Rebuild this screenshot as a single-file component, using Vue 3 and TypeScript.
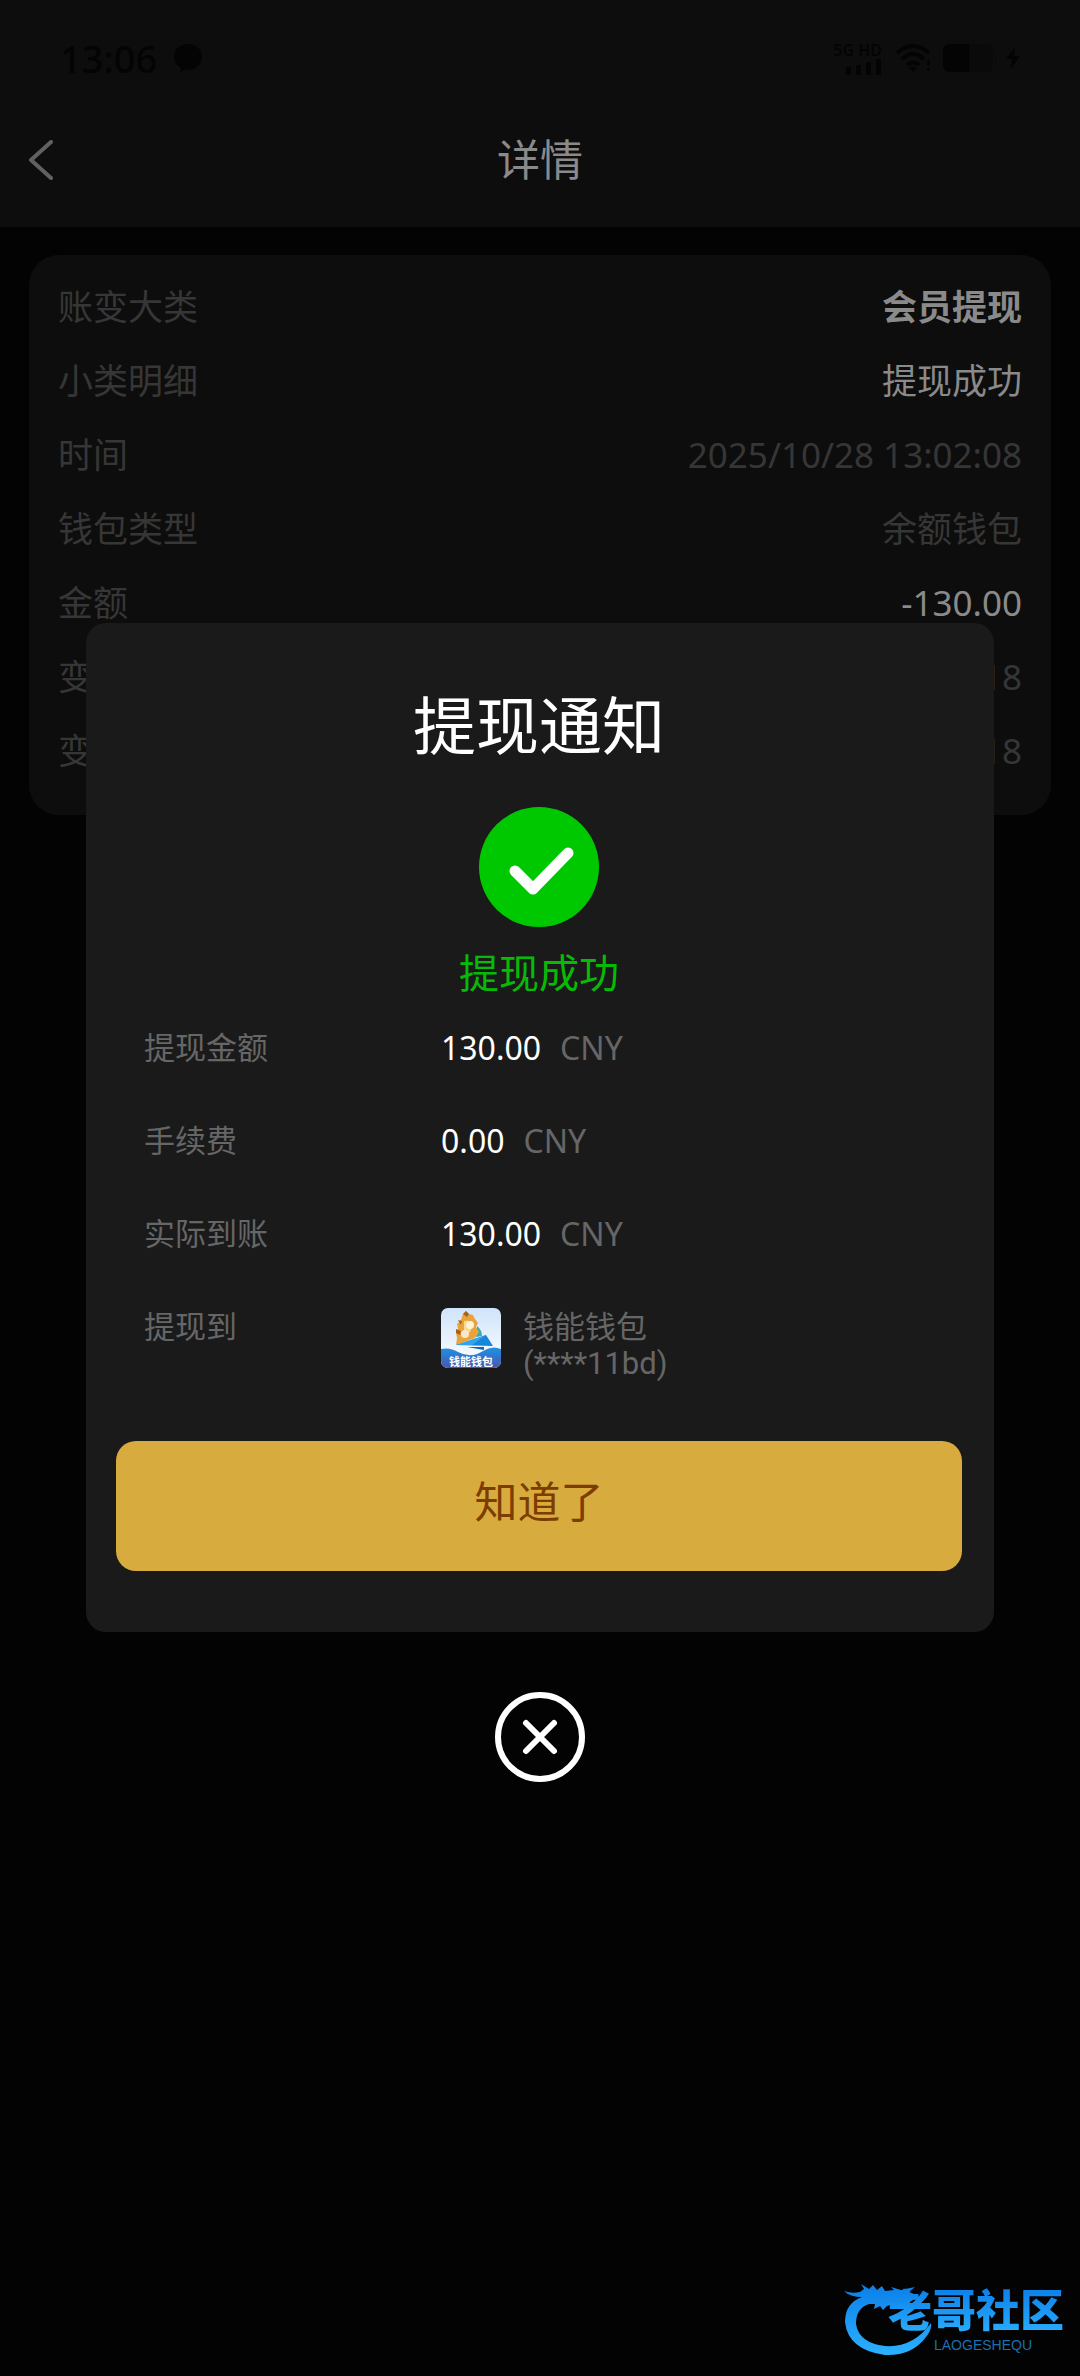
<script setup lang="ts">
import { ref } from 'vue'

interface DetailRow {
  label: string
  value: string
  tone?: 'strong' | 'bright'
}

interface AmountRow {
  label: string
  amount: string
}

const rows: DetailRow[] = [
  { label: '账变大类', value: '会员提现', tone: 'strong' },
  { label: '小类明细', value: '提现成功', tone: 'bright' },
  { label: '时间', value: '2025/10/28 13:02:08' },
  { label: '钱包类型', value: '余额钱包' },
  { label: '金额', value: '-130.00', tone: 'bright' },
  { label: '变动前', value: '0.18' },
  { label: '变动后', value: '0.18' },
]

const amounts: AmountRow[] = [
  { label: '提现金额', amount: '130.00' },
  { label: '手续费', amount: '0.00' },
  { label: '实际到账', amount: '130.00' },
]

const open = ref(true)
</script>

<template>
  <div class="page">
    <header class="top">
      <div class="status">
        <span class="clock">13:06</span>
        <svg class="bubble" viewBox="0 0 30 30" aria-hidden="true">
          <path d="M15 1C7 1 1 6.500 1 14c0 5 3 8.500 7 11l-1 4 6-2.500c9 1 16-4.500 16-12.500C29 6.500 23 1 15 1z" />
        </svg>
        <span class="spacer"></span>
        <div class="signal">
          <span>5G HD</span>
          <svg viewBox="0 0 36 16" aria-hidden="true">
            <path d="M0 8h5v8H0zM10 6h5v10h-5zM20 3h5v13h-5zM30 0h5v16h-5z" />
          </svg>
        </div>
        <svg class="wifi" viewBox="0 0 36 30" aria-hidden="true">
          <path d="M2 10Q18-4 34 10M7 16q11-10 22 0M12 22q6-5 12 0" fill="none" stroke="#040404" stroke-width="4" />
          <path d="M14 25q4-3 8 0l-4 4zM32 17h3v5h-3zM32 25h3v3h-3z" />
        </svg>
        <svg class="battery" viewBox="0 0 54 28" aria-hidden="true">
          <rect width="50" height="28" rx="7" fill="#0a0a0a" />
          <path d="M26 0H7Q0 0 0 7v14q0 7 7 7h19z" />
          <path d="M52 9q2 5 0 10z" fill="#0a0a0a" />
        </svg>
        <svg class="bolt" viewBox="0 0 14 22" aria-hidden="true">
          <path d="M9 0 0 12h6L5 22l9-13H8z" />
        </svg>
      </div>
      <nav class="nav">
        <button class="back" type="button" aria-label="返回">
          <svg viewBox="0 0 26 40" aria-hidden="true">
            <path d="M23 2 3 20l20 18" fill="none" stroke="#616161" stroke-width="4" stroke-linecap="round" stroke-linejoin="round" />
          </svg>
        </button>
        <h1>详情</h1>
      </nav>
    </header>

    <main class="content">
      <dl class="card">
        <div v-for="row in rows" :key="row.label" class="row">
          <dt>{{ row.label }}</dt>
          <dd :class="row.tone">{{ row.value }}</dd>
        </div>
      </dl>
    </main>

    <div v-if="open" class="overlay">
      <section class="modal" role="dialog" aria-modal="true" aria-labelledby="notice-title">
        <h2 id="notice-title">提现通知</h2>
        <svg class="tick" viewBox="0 0 120 120" aria-hidden="true">
          <circle cx="60" cy="60" r="60" fill="#00c800" />
          <path d="M36 64l18 18 35-36" fill="none" stroke="#fff" stroke-width="11" stroke-linecap="round" stroke-linejoin="round" />
        </svg>
        <p class="result">提现成功</p>
        <dl class="facts">
          <div v-for="item in amounts" :key="item.label" class="fact">
            <dt>{{ item.label }}</dt>
            <dd class="money"><b>{{ item.amount }}</b><span>CNY</span></dd>
          </div>
          <div class="fact">
            <dt>提现到</dt>
            <dd>
              <svg class="wallet" viewBox="0 0 60 60" aria-hidden="true">
                <defs>
                  <linearGradient id="sky" x1="0" y1="0" x2="0" y2="1">
                    <stop offset="0" stop-color="#cfe4fb" />
                    <stop offset="1" stop-color="#ffffff" />
                  </linearGradient>
                  <linearGradient id="sea" x1="0" y1="0" x2="0" y2="1">
                    <stop offset="0" stop-color="#1d93e4" />
                    <stop offset="1" stop-color="#4a55ad" />
                  </linearGradient>
                  <clipPath id="tile"><rect width="60" height="60" rx="7" /></clipPath>
                </defs>
                <g clip-path="url(#tile)">
                  <rect width="60" height="60" fill="url(#sky)" />
                  <path d="M36 18q5 4 5 10l-6 1z" fill="#39aab5" />
                  <path d="M22 6l3-3 3 3 4 1 2 4 3 4-2 4 3 5-4 6-19 7 1-7-1-5 2-4-1-5 4-4z" fill="#e9a33b" />
                  <path d="M22 6l3-3 3 3-2 3zM15 21l5 2-1 4-4-2zM17 12l4 1-1 4z" fill="#a8611d" />
                  <path d="M23 13q6-2 9 4l-3 7q-5 4-6-2z" fill="#fbd68b" />
                  <circle cx="29" cy="17" r="4" fill="#fff3dc" />
                  <circle cx="24" cy="26" r="4" fill="#f7e7c9" />
                  <path d="M15 37 45 27l7 11z" fill="#1685dc" />
                  <path d="M15 37l30-10-14 10z" fill="#30a4ee" />
                  <path d="M26 39h17v3z" fill="#1568b8" />
                  <path d="M0 41q9-2 17 3 13 7 25-1 9-6 18-2v19H0z" fill="url(#sea)" />
                </g>
                <text x="30" y="58" text-anchor="middle" font-size="11" font-weight="700" fill="#fff">钱能钱包</text>
              </svg>
              <div class="account">
                <span>钱能钱包</span>
                <span class="number">(****11bd)</span>
              </div>
            </dd>
          </div>
        </dl>
        <button class="confirm" type="button" @click="open = false">知道了</button>
      </section>
      <button class="close" type="button" aria-label="关闭" @click="open = false">
        <svg viewBox="0 0 90 90" aria-hidden="true">
          <circle cx="45" cy="45" r="42" fill="none" stroke="#fff" stroke-width="6" />
          <path d="M31 31l28 28M59 31 31 59" stroke="#fff" stroke-width="6" stroke-linecap="round" />
        </svg>
      </button>
    </div>

    <div class="brand">
      <svg viewBox="0 0 90 72" aria-hidden="true">
        <defs>
          <linearGradient id="blue" x1="0" y1="0" x2="0" y2="1">
            <stop offset="0" stop-color="#0b7fe8" />
            <stop offset="1" stop-color="#2cb0ff" />
          </linearGradient>
        </defs>
        <path
          fill="url(#blue)"
          d="M0 7q8 3 16 1l4-3-3-5 8 5 4-4 4 5 5-4 3 5 9-1-3-3 10 3 14-3-6 5 5 2-8 4 9 1-7 4-12 0-9 3-4 4-3-4-6 3 1-5-6 0Q12 24 12 40q3 19 29 22 28 2 46-23 1 7-5 14-14 19-41 18Q4 66 1 38 1 19 18 13 6 13 0 7z"
        />
      </svg>
      <div class="words">
        <span class="name">老哥社区</span>
        <span class="latin">LAOGESHEQU</span>
      </div>
    </div>
  </div>
</template>

<style>
body {
  margin: 0;
  background: #030303;
}
</style>

<style scoped>
.page {
  position: relative;
  min-height: 100vh;
  background: #030303;
  color: #363636;
  font-family: "Noto Sans", "Noto Sans CJK SC", sans-serif;
  font-size: 35px;
}

h1,
h2,
p,
dl,
dd {
  margin: 0;
  font-weight: 400;
}

button {
  padding: 0;
  border: 0;
  background: none;
  font: inherit;
  cursor: pointer;
}

svg {
  display: block;
  flex: none;
}

.top {
  background: #0d0d0d;
}

.status {
  display: flex;
  align-items: center;
  height: 116px;
  padding: 0 60px;
  color: #040404;
  fill: #040404;
}

.clock {
  font-size: 38px;
  font-weight: 500;
  line-height: 44px;
}

.bubble {
  width: 30px;
  height: 30px;
  margin-left: 16px;
}

.spacer {
  flex: 1;
}

.signal {
  display: flex;
  flex-direction: column;
  align-items: flex-end;
  font-size: 16px;
  font-weight: 600;
  line-height: 18px;
}

.signal svg {
  width: 36px;
  height: 16px;
}

.wifi {
  width: 36px;
  height: 30px;
  margin-left: 13px;
}

.battery {
  width: 54px;
  height: 28px;
  margin-left: 12px;
}

.bolt {
  width: 14px;
  height: 22px;
  margin-left: 9px;
}

.nav {
  display: grid;
  grid-template-columns: 80px 1fr 80px;
  height: 111px;
}

.back {
  display: flex;
  align-items: center;
  height: 88px;
  padding-left: 28px;
}

.back svg {
  width: 26px;
  height: 40px;
}

h1 {
  color: #8a8a8a;
  font-size: 43px;
  line-height: 88px;
  text-align: center;
}

.content {
  padding: 28px 29px;
}

.card {
  padding: 15px 29px 27px;
  border-radius: 30px;
  background: #0d0d0d;
}

.row {
  display: flex;
  justify-content: space-between;
  line-height: 74px;
}

.bright,
.strong {
  color: #8a8a8a;
}

.strong {
  font-weight: 700;
}

.overlay {
  position: absolute;
  inset: 0;
  display: flex;
  flex-direction: column;
  align-items: center;
  justify-content: center;
  padding: 29px 86px 0;
}

.modal {
  box-sizing: border-box;
  width: 100%;
  padding: 62px 32px 61px 30px;
  border-radius: 20px;
  background: #1a1a1a;
}

h2 {
  color: #fff;
  font-size: 63px;
  line-height: 80px;
  text-align: center;
}

.tick {
  width: 120px;
  height: 120px;
  margin: 42px auto 0;
}

.result {
  margin-top: 16px;
  color: #06ba06;
  font-size: 40px;
  line-height: 60px;
  text-align: center;
}

.facts {
  display: flex;
  flex-direction: column;
  gap: 56px;
  margin-top: 26px;
  padding-left: 28px;
  color: #666;
  font-size: 31px;
  line-height: 37px;
}

.fact {
  display: grid;
  grid-template-columns: 297px 1fr;
}

.fact dd {
  display: flex;
}

.money {
  gap: 19px;
  font-size: 32px;
}

.money b {
  color: #fff;
  font-weight: 400;
}

.wallet {
  width: 60px;
  height: 60px;
}

.account {
  display: flex;
  flex-direction: column;
  margin-left: 22px;
}

.number {
  font-family: Roboto, sans-serif;
}

.confirm {
  display: block;
  width: 100%;
  height: 130px;
  margin-top: 59px;
  padding-bottom: 14px;
  border-radius: 20px;
  background: #d8ab3e;
  color: #7d3c00;
  font-size: 43px;
}

.close {
  margin-top: 60px;
}

.close svg {
  width: 90px;
  height: 90px;
}

.brand {
  position: absolute;
  right: 16px;
  bottom: 20px;
  display: flex;
  align-items: center;
}

.brand svg {
  width: 90px;
  height: 72px;
  margin-right: -46px;
}

.words {
  display: flex;
  flex-direction: column;
}

.name {
  background: linear-gradient(#0b7fe8, #2cb0ff);
  background-clip: text;
  color: transparent;
  font-family: "Liberation Sans", "Noto Sans CJK SC", sans-serif;
  font-size: 44px;
  font-weight: 900;
  line-height: 50px;
}

.latin {
  padding-left: 46px;
  color: #1a6fae;
  font-family: "Liberation Sans", sans-serif;
  font-size: 14px;
  line-height: 16px;
}
</style>
